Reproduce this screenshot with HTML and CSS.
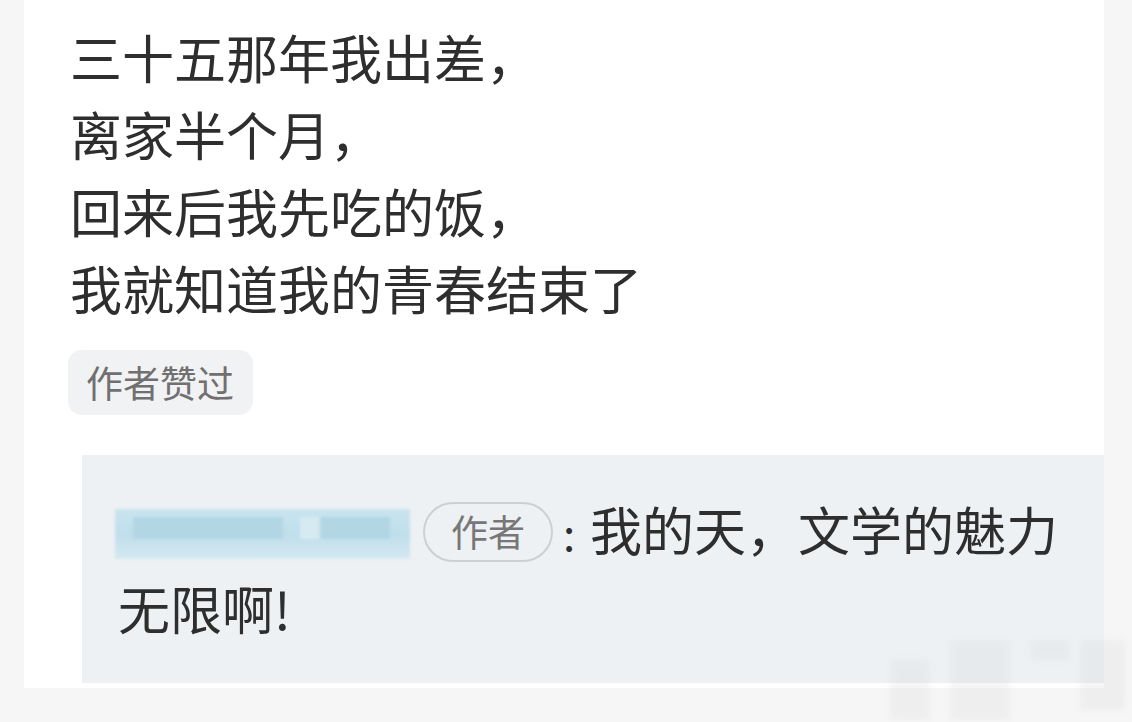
FILE: index.html
```html
<!DOCTYPE html>
<html>
<head>
    <title>评论</title>
    <meta charset="UTF-8">
    <link rel="stylesheet" href="styles.css">
</head>
<body>
    <div class="card">
        <div class="post">
            <p>三十五那年我出差，</p>
            <p>离家半个月，</p>
            <p>回来后我先吃的饭，</p>
            <p>我就知道我的青春结束了</p>
        </div>
        <div class="liked">作者赞过</div>

        <div class="reply">
            <p class="reply-text"><span class="name-blur"><i class="b1"></i><i class="b2"></i><i class="b3"></i></span><span class="author-tag">作者</span><span class="colon">:</span>我的天，文学的魅力<br>无限啊!</p>
        </div>
    </div>

    <!-- 水印 -->
    <div class="watermark">
        <i class="w1"></i><i class="w2"></i><i class="w3"></i><i class="w4"></i>
    </div>
</body>
</html>
```

FILE: styles.css
```css
* {
    box-sizing: border-box;
    margin: 0;
    padding: 0;
}

body {
    font-family: "Noto Sans CJK SC", "Noto Sans", sans-serif;
    color: #2e2e2e;
    background-color: #f6f6f7;
    width: 1132px;
    height: 722px;
    overflow: hidden;
    position: relative;
}

.card {
    margin-left: 24px;
    width: 1080px;
    height: 688px;
    background: white;
    padding: 18px 0 0 44px;
}

.post p {
    font-size: 52px;
    line-height: 77px;
    height: 77px;
    padding-left: 2px;
    white-space: nowrap;
}

.liked {
    display: inline-block;
    margin-top: 24px;
    height: 65px;
    line-height: 65px;
    padding: 0 19px 0 18px;
    font-size: 37px;
    color: #707070;
    background: #f1f2f4;
    border-radius: 14px;
}

.reply {
    margin: 40px 0 0 14px;
    height: 228px;
    background: #eef1f4;
    padding: 36px 0 0 36px;
}

.reply-text {
    font-size: 52px;
    line-height: 76px;
    white-space: nowrap;
}

.name-blur {
    display: inline-block;
    position: relative;
    width: 295px;
    height: 50px;
    margin-left: -3px;
    vertical-align: -8px;
    background: linear-gradient(180deg, #c9e4ef 0%, #bfdeeb 50%, #d3e8f1 100%);
    filter: blur(1.5px);
}

.name-blur i {
    position: absolute;
    top: 8px;
    height: 22px;
    background: #b3d6e5;
}

.name-blur .b1 { left: 18px; width: 150px; }
.name-blur .b2 { left: 185px; width: 20px; background: #d6eaf2; }
.name-blur .b3 { left: 205px; width: 70px; }

.author-tag {
    display: inline-block;
    margin-left: 13px;
    width: 130px;
    height: 60px;
    line-height: 54px;
    text-align: center;
    font-size: 37px;
    color: #777;
    border: 2px solid #cfcfcf;
    border-radius: 30px;
    vertical-align: 4px;
}

.colon {
    display: inline-block;
    width: 37px;
    padding-left: 10px;
    font-size: 44px;
}

.watermark {
    position: absolute;
    left: 880px;
    top: 640px;
    width: 250px;
    height: 82px;
    opacity: 0.2;
    filter: blur(3px);
}

.watermark i {
    position: absolute;
    background: #cfcfcf;
}

.watermark .w1 { left: 10px; top: 20px; width: 40px; height: 60px; }
.watermark .w2 { left: 70px; top: 0; width: 60px; height: 80px; }
.watermark .w3 { left: 150px; top: 0; width: 40px; height: 20px; }
.watermark .w4 { left: 200px; top: 0; width: 45px; height: 70px; }
```
